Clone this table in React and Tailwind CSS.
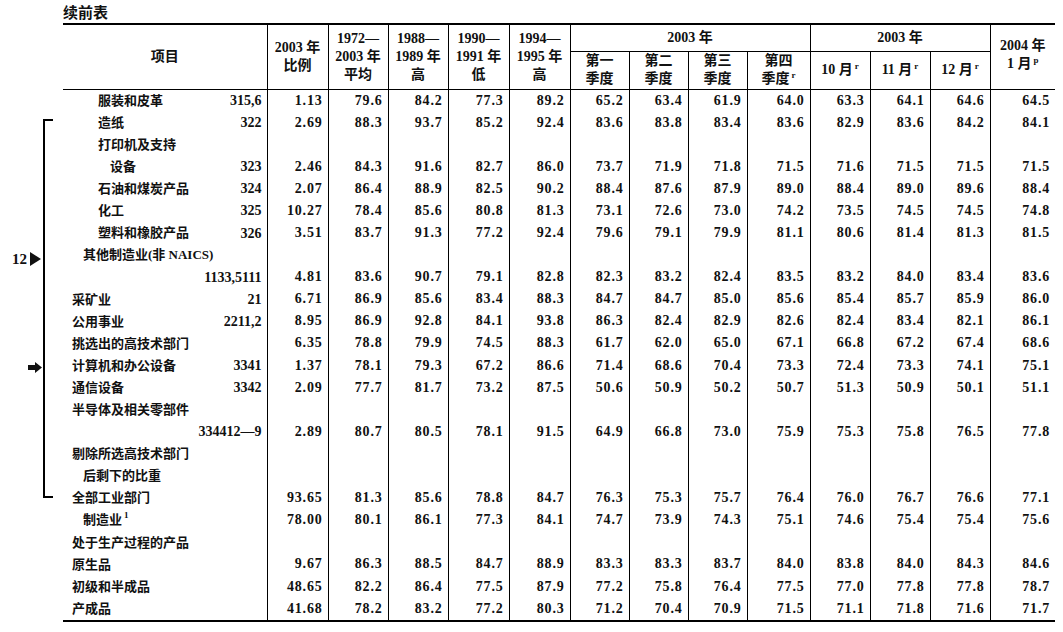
const COLS = [204, 61, 60, 60, 61, 61, 59, 59, 59, 63, 60, 60, 60, 65];

const rows = [
  { name: '服装和皮革', code: '315,6', ind: 'pl-[35px]', v: ['1.13', '79.6', '84.2', '77.3', '89.2', '65.2', '63.4', '61.9', '64.0', '63.3', '64.1', '64.6', '64.5'] },
  { name: '造纸', code: '322', ind: 'pl-[35px]', v: ['2.69', '88.3', '93.7', '85.2', '92.4', '83.6', '83.8', '83.4', '83.6', '82.9', '83.6', '84.2', '84.1'] },
  { name: '打印机及支持', ind: 'pl-[35px]' },
  { name: '设备', code: '323', ind: 'pl-[47px]', v: ['2.46', '84.3', '91.6', '82.7', '86.0', '73.7', '71.9', '71.8', '71.5', '71.6', '71.5', '71.5', '71.5'] },
  { name: '石油和煤炭产品', code: '324', ind: 'pl-[35px]', v: ['2.07', '86.4', '88.9', '82.5', '90.2', '88.4', '87.6', '87.9', '89.0', '88.4', '89.0', '89.6', '88.4'] },
  { name: '化工', code: '325', ind: 'pl-[35px]', v: ['10.27', '78.4', '85.6', '80.8', '81.3', '73.1', '72.6', '73.0', '74.2', '73.5', '74.5', '74.5', '74.8'] },
  { name: '塑料和橡胶产品', code: '326', ind: 'pl-[35px]', v: ['3.51', '83.7', '91.3', '77.2', '92.4', '79.6', '79.1', '79.9', '81.1', '80.6', '81.4', '81.3', '81.5'] },
  { name: '其他制造业(非 NAICS)', ind: 'pl-[20px]' },
  { name: '', code: '1133,5111', ind: 'pl-[20px]', v: ['4.81', '83.6', '90.7', '79.1', '82.8', '82.3', '83.2', '82.4', '83.5', '83.2', '84.0', '83.4', '83.6'] },
  { name: '采矿业', code: '21', ind: 'pl-[9px]', v: ['6.71', '86.9', '85.6', '83.4', '88.3', '84.7', '84.7', '85.0', '85.6', '85.4', '85.7', '85.9', '86.0'] },
  { name: '公用事业', code: '2211,2', ind: 'pl-[9px]', v: ['8.95', '86.9', '92.8', '84.1', '93.8', '86.3', '82.4', '82.9', '82.6', '82.4', '83.4', '82.1', '86.1'] },
  { name: '挑选出的高技术部门', ind: 'pl-[9px]', v: ['6.35', '78.8', '79.9', '74.5', '88.3', '61.7', '62.0', '65.0', '67.1', '66.8', '67.2', '67.4', '68.6'] },
  { name: '计算机和办公设备', code: '3341', ind: 'pl-[9px]', v: ['1.37', '78.1', '79.3', '67.2', '86.6', '71.4', '68.6', '70.4', '73.3', '72.4', '73.3', '74.1', '75.1'] },
  { name: '通信设备', code: '3342', ind: 'pl-[9px]', v: ['2.09', '77.7', '81.7', '73.2', '87.5', '50.6', '50.9', '50.2', '50.7', '51.3', '50.9', '50.1', '51.1'] },
  { name: '半导体及相关零部件', ind: 'pl-[9px]' },
  { name: '', code: '334412—9', ind: 'pl-[9px]', v: ['2.89', '80.7', '80.5', '78.1', '91.5', '64.9', '66.8', '73.0', '75.9', '75.3', '75.8', '76.5', '77.8'] },
  { name: '剔除所选高技术部门', ind: 'pl-[9px]' },
  { name: '后剩下的比重', ind: 'pl-[20px]' },
  { name: '全部工业部门', ind: 'pl-[9px]', v: ['93.65', '81.3', '85.6', '78.8', '84.7', '76.3', '75.3', '75.7', '76.4', '76.0', '76.7', '76.6', '77.1'] },
  { name: '制造业', sup: '1', ind: 'pl-[20px]', v: ['78.00', '80.1', '86.1', '77.3', '84.1', '74.7', '73.9', '74.3', '75.1', '74.6', '75.4', '75.4', '75.6'] },
  { name: '处于生产过程的产品', ind: 'pl-[9px]' },
  { name: '原生品', ind: 'pl-[9px]', v: ['9.67', '86.3', '88.5', '84.7', '88.9', '83.3', '83.3', '83.7', '84.0', '83.8', '84.0', '84.3', '84.6'] },
  { name: '初级和半成品', ind: 'pl-[9px]', v: ['48.65', '82.2', '86.4', '77.5', '87.9', '77.2', '75.8', '76.4', '77.5', '77.0', '77.8', '77.8', '78.7'] },
  { name: '产成品', ind: 'pl-[9px]', v: ['41.68', '78.2', '83.2', '77.2', '80.3', '71.2', '70.4', '70.9', '71.5', '71.1', '71.8', '71.6', '71.7'] },
];

const th = 'border-r border-b-[1.5px] border-black text-center align-middle font-bold leading-[18px]';

function Sup({ children }) {
  return <span className="inline-block text-[9px] font-bold leading-none align-top relative top-[1px] ml-[2px]">{children}</span>;
}

export default function App() {
  return (
    <div className="relative w-[1063px] h-[632px] bg-white text-[#111] font-['Liberation_Serif','Noto_Sans_CJK_SC',serif] overflow-hidden">
      <div className="pt-[3px] pl-[63px]">
        <div className="h-[20px] text-[15px] leading-[20px] font-bold">续前表</div>

        <table className="table-fixed border-collapse w-[992px] border-t-2 border-b-2 border-black">
          <colgroup>
            {COLS.map((w, i) => (
              <col key={i} style={{ width: w }} />
            ))}
          </colgroup>
          <thead className="text-[14px]">
            <tr className="h-[27px]">
              <th rowSpan={2} className={th}>项目</th>
              <th rowSpan={2} className={th}>2003 年<br />比例</th>
              <th rowSpan={2} className={th}>1972—<br />2003 年<br />平均</th>
              <th rowSpan={2} className={th}>1988—<br />1989 年<br />高</th>
              <th rowSpan={2} className={th}>1990—<br />1991 年<br />低</th>
              <th rowSpan={2} className={th}>1994—<br />1995 年<br />高</th>
              <th colSpan={4} className="border-r border-b border-black text-center font-bold">2003 年</th>
              <th colSpan={3} className="border-r border-b border-black text-center font-bold">2003 年</th>
              <th rowSpan={2} className="border-b-[1.5px] border-black text-center font-bold leading-[18px] pb-[4px]">
                2004 年<br />1 月<Sup>p</Sup>
              </th>
            </tr>
            <tr className="h-[38px]">
              <th className={th}>第一<br />季度</th>
              <th className={th}>第二<br />季度</th>
              <th className={th}>第三<br />季度</th>
              <th className={th}>第四<br />季度<Sup>r</Sup></th>
              <th className={th}>10 月<Sup>r</Sup></th>
              <th className={th}>11 月<Sup>r</Sup></th>
              <th className={th}>12 月<Sup>r</Sup></th>
            </tr>
          </thead>
          <tbody>
            {rows.map((r, i) => (
              <tr key={i} className="h-[22.1px]">
                <td className="border-r border-black p-0">
                  <div className="flex items-center justify-between pr-[5px]">
                    <span className={`${r.ind} text-[13px] font-bold whitespace-nowrap`}>
                      {r.name}
                      {r.sup && <Sup>{r.sup}</Sup>}
                    </span>
                    {r.code && <span className="text-[14px] font-bold">{r.code}</span>}
                  </div>
                </td>
                {Array.from({ length: 13 }).map((_, j) => (
                  <td
                    key={j}
                    className={`${j < 12 ? 'border-r border-black' : ''} text-right pr-[5px] text-[14px] font-bold tracking-[0.8px] leading-[22px]`}
                  >
                    {r.v ? r.v[j] : ''}
                  </td>
                ))}
              </tr>
            ))}
          </tbody>
        </table>
      </div>

      {/* bracket annotation */}
      <div className="absolute left-[43px] top-[119px] w-[1.5px] h-[378px] bg-black" />
      <div className="absolute left-[43px] top-[119px] w-[10px] h-[1.5px] bg-black" />
      <div className="absolute left-[43px] top-[496px] w-[10px] h-[1.5px] bg-black" />
      <div className="absolute left-[12px] top-[250px] flex items-center gap-[3px]">
        <span className="text-[15px] font-bold leading-[18px]">12</span>
        <svg width="11" height="14" viewBox="0 0 11 14">
          <path d="M0 0 L11 7 L0 14 Z" fill="#111" />
        </svg>
      </div>
      <svg className="absolute left-[28px] top-[362px]" width="14" height="11" viewBox="0 0 14 11">
        <path d="M0 3 H7 V0 L14 5.5 L7 11 V8 H0 Z" fill="#111" />
      </svg>
    </div>
  );
}
